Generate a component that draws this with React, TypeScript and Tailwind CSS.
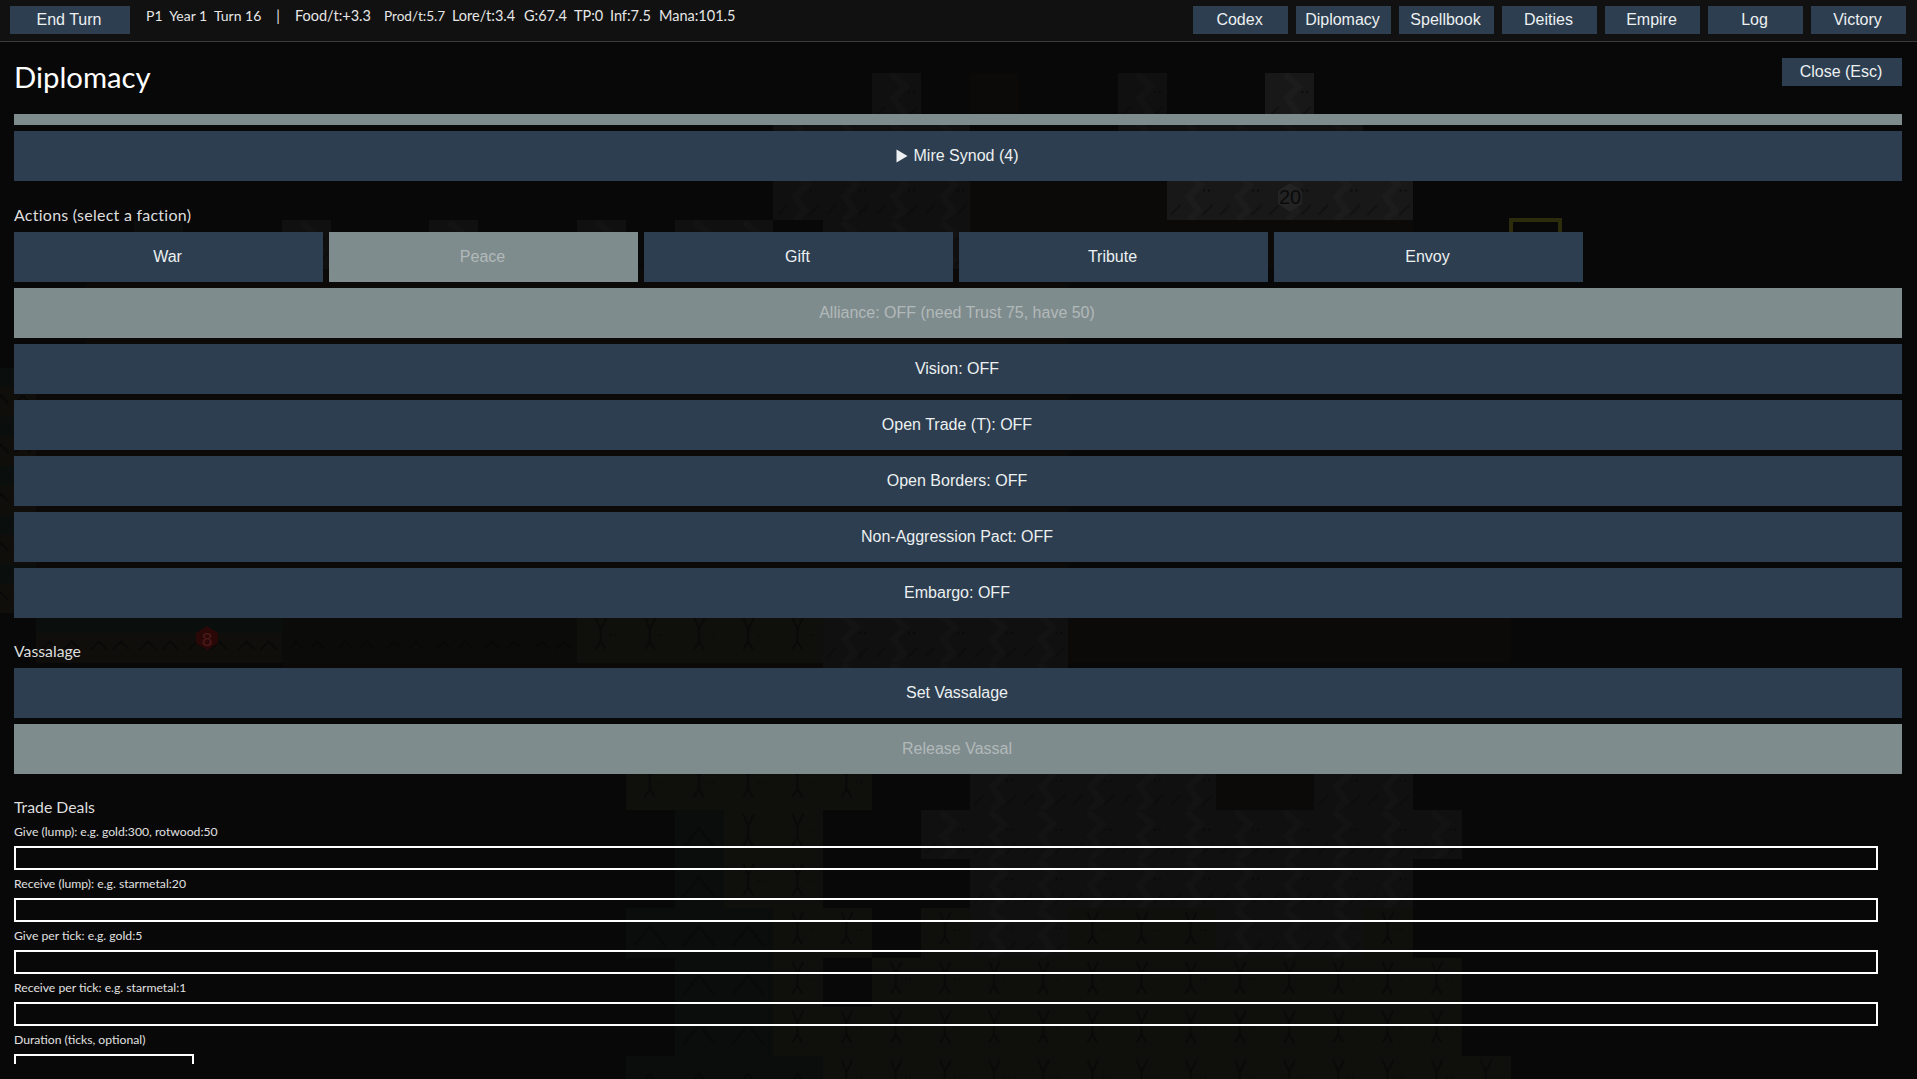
const NAV = ["Codex", "Diplomacy", "Spellbook", "Deities", "Empire", "Log", "Victory"];
const ACTIONS = ["War", "Peace", "Gift", "Tribute", "Envoy"];
const TOGGLES = [
  "Vision: OFF",
  "Open Trade (T): OFF",
  "Open Borders: OFF",
  "Non-Aggression Pact: OFF",
  "Embargo: OFF",
];
const DEAL_FIELDS = [
  "Give (lump): e.g. gold:300, rotwood:50",
  "Receive (lump): e.g. starmetal:20",
  "Give per tick: e.g. gold:5",
  "Receive per tick: e.g. starmetal:1",
];

// map tiles seen through the dim overlay: [row, first column, last column, kind]
const TILE = 49.17;
const ORIGIN_X = 35.8;
const ORIGIN_Y = 72.5;
const TILES: [number, number, number, string][] = [
  [0, 17, 17, "rock"], [0, 19, 19, "dirt"], [0, 22, 22, "rock"], [0, 25, 25, "rockHi"],
  [1, 15, 18, "rock"], [1, 22, 26, "rock"],
  [2, 15, 18, "rock"], [2, 19, 22, "dirt"], [2, 23, 27, "rockHi"],
  [3, 2, 2, "teal"], [3, 5, 5, "rock"], [3, 8, 8, "rock"], [3, 11, 11, "rock"], [3, 13, 13, "rock"],
  [3, 14, 14, "rock"], [3, 16, 18, "rock"], [3, 19, 27, "dirt"],
  [4, 1, 20, "dirt"], [5, 1, 20, "dirt"],
  [6, -1, -1, "ridge"], [6, 0, 20, "dirt"],
  [7, -1, -1, "ridge"], [7, 0, 20, "dirt"],
  [8, -1, -1, "ridge"], [8, 0, 20, "dirt"],
  [9, -1, -1, "ridge"], [9, 0, 20, "dirt"],
  [10, -1, -1, "ridge"], [10, 0, 20, "dirt"],
  [11, 0, 4, "ridge"], [11, 5, 10, "ridgeDim"], [11, 11, 15, "bush"], [11, 16, 20, "rock"], [11, 21, 29, "dirt"],
  [12, 5, 15, "dirt"], [12, 16, 20, "rock"],
  [14, 12, 16, "bush"], [14, 19, 23, "rock"], [14, 24, 25, "dirt"], [14, 26, 27, "rock"],
  [15, 13, 13, "teal"], [15, 14, 15, "bush"], [15, 18, 28, "rock"],
  [16, 13, 13, "teal"], [16, 14, 15, "bush"], [16, 19, 27, "rock"],
  [17, 12, 14, "teal"], [17, 15, 16, "bush"], [17, 18, 18, "bush"], [17, 19, 20, "rock"],
  [17, 21, 23, "bush"], [17, 24, 26, "rock"], [17, 27, 27, "bush"],
  [18, 13, 14, "teal"], [18, 15, 15, "bush"], [18, 17, 28, "bush"],
  [19, 13, 14, "teal"], [19, 15, 28, "bush"],
  [20, 12, 15, "teal"], [20, 16, 29, "bush"],
];

const STATS: [string, string][] = [
  ["Food/t:+3.3", "w-[89px]"],
  ["Prod/t:5.7", "w-[68px] text-[13.6px]"],
  ["Lore/t:3.4", "w-[72px]"],
  ["G:67.4", "w-[50px]"],
  ["TP:0", "w-[36px]"],
  ["Inf:7.5", "w-[49px]"],
  ["Mana:101.5", "w-[80px]"],
];

const MapBackdrop = () => (
  <svg className="absolute inset-0" width="1917" height="1079" shapeRendering="crispEdges">
    <defs>
      <pattern id="rock" width={TILE} height={TILE} patternUnits="userSpaceOnUse" patternTransform={`translate(${ORIGIN_X} ${ORIGIN_Y})`}>
        <rect width="50" height="50" fill="#101010" />
        <path d="M20 2 L34 14 L22 26 L32 40 L22 49" fill="none" stroke="#131313" strokeWidth="6" shapeRendering="auto" />
        <path d="M4 44 L14 34 M36 44 L46 34" stroke="#0c0c0c" strokeWidth="2" shapeRendering="auto" />
        <path d="M36 20h2M41 20h2" stroke="#0a0a0a" strokeWidth="2" />
      </pattern>
      <pattern id="rockHi" width={TILE} height={TILE} patternUnits="userSpaceOnUse" patternTransform={`translate(${ORIGIN_X} ${ORIGIN_Y})`}>
        <rect width="50" height="50" fill="#181818" />
        <path d="M20 2 L34 14 L22 26 L32 40 L22 49" fill="none" stroke="#1c1c1c" strokeWidth="6" shapeRendering="auto" />
        <path d="M4 44 L14 34 M36 44 L46 34" stroke="#111111" strokeWidth="2" shapeRendering="auto" />
        <path d="M36 20h2M41 20h2" stroke="#0c0c0c" strokeWidth="2" />
      </pattern>
      <pattern id="bush" width={TILE} height={TILE} patternUnits="userSpaceOnUse" patternTransform={`translate(${ORIGIN_X} ${ORIGIN_Y})`}>
        <rect width="50" height="50" fill="#0f0f0c" />
        <path d="M19 4 L24 16 L30 4 M24 16 L24 28 M19 36 L24 28 L29 36" fill="none" stroke="#090908" strokeWidth="2" shapeRendering="auto" />
        <path d="M33 22h2M37 22h2" stroke="#0b0b09" strokeWidth="2" />
      </pattern>
      <pattern id="teal" width={TILE} height={TILE} patternUnits="userSpaceOnUse" patternTransform={`translate(${ORIGIN_X} ${ORIGIN_Y})`}>
        <rect width="50" height="50" fill="#0b0d0d" />
        <path d="M8 38 L24 18 L40 38" fill="none" stroke="#080909" strokeWidth="3" shapeRendering="auto" />
      </pattern>
      <pattern id="ridge" width={TILE} height={TILE} patternUnits="userSpaceOnUse" patternTransform={`translate(${ORIGIN_X} ${ORIGIN_Y})`}>
        <rect width="50" height="50" fill="#100e0a" />
        <rect width="50" height="20" fill="#0a0f0e" />
        <path d="M6 36 L14 28 L22 36 M28 36 L36 28 L44 36" fill="none" stroke="#080808" strokeWidth="2" shapeRendering="auto" />
      </pattern>
      <pattern id="ridgeDim" width={TILE} height={TILE} patternUnits="userSpaceOnUse" patternTransform={`translate(${ORIGIN_X} ${ORIGIN_Y})`}>
        <rect width="50" height="50" fill="#0b0b0a" />
        <path d="M6 36 L14 28 L22 36 M28 36 L36 28 L44 36" fill="none" stroke="#080808" strokeWidth="2" shapeRendering="auto" />
      </pattern>
    </defs>
    {TILES.map(([row, from, to, kind]) => (
      <rect
        key={`${row}-${from}`}
        x={ORIGIN_X + from * TILE}
        y={ORIGIN_Y + row * TILE}
        width={(to - from + 1) * TILE}
        height={TILE}
        fill={kind === "dirt" ? "#0b0a08" : `url(#${kind})`}
      />
    ))}
    {/* selected tile and city badges */}
    <rect x="1511" y="220" width="49" height="50" fill="none" stroke="#2c2c0c" strokeWidth="4" />
    <path d="M1290 183 L1302 191 L1302 204 L1290 212 L1278 204 L1278 191 Z" fill="#232323" shapeRendering="auto" />
    <text x="1290" y="204" textAnchor="middle" fontFamily="'Liberation Sans', sans-serif" fontSize="20" fill="#0a0a0a">20</text>
    <path d="M207 626 L218 633 L218 643 L207 650 L196 643 L196 633 Z" fill="#2a0808" shapeRendering="auto" />
    <text x="207" y="646" textAnchor="middle" fontFamily="'Liberation Sans', sans-serif" fontSize="19" fill="#4a1a1a">8</text>
  </svg>
);

const Btn = ({ label, off, className }: { label: string; off?: boolean; className: string }) => (
  <button
    className={`block shrink-0 pr-[2px] font-['Liberation_Sans',sans-serif] text-base ${
      off ? "bg-[#7f8c8d] text-[#b2b9ba]" : "bg-[#2c3e50] text-[#ecf0f1]"
    } ${className}`}
  >
    {label}
  </button>
);

const App = () => {
  return (
    <div className="relative w-[1917px] h-[1079px] overflow-hidden bg-[#080808] font-['Lato',sans-serif] text-[#dedede]">
      <MapBackdrop />

      {/* TOP BAR */}
      <div className="relative flex h-[42px] items-start border-b border-[#3a3a3a] bg-[#111111] pt-[6px] pl-[10px] pr-[11px]">
        <Btn label="End Turn" className="w-[120px] h-[28px]" />
        <div className="ml-[16px] flex text-[14.5px] leading-[20px] text-[#e6e6e6]">
          <span className="whitespace-pre text-[14px]">{"P1  Year 1  Turn 16"}</span>
          <span className="ml-[15px] mr-[15px]">|</span>
          {STATS.map(([text, width]) => (
            <span key={text} className={`whitespace-pre ${width}`}>
              {text}
            </span>
          ))}
        </div>
        <div className="ml-auto flex gap-[8px]">
          {NAV.map((name) => (
            <Btn key={name} label={name} className="w-[95px] h-[28px]" />
          ))}
        </div>
      </div>

      {/* DIPLOMACY PANEL */}
      <div className="absolute left-0 top-[42px] w-[1917px] h-[1022px] overflow-hidden px-[14px]">
        <Btn label="Close (Esc)" className="absolute right-[15px] top-[16px] w-[120px] h-[28px]" />
        <h1 className="h-[72px] pt-[15px] text-[29.3px] leading-[40px] text-white">Diplomacy</h1>

        <div className="h-[11px] w-[1888px] bg-[#7f8c8d]" />
        <div className="mt-[6px] flex h-[50px] w-[1888px] items-center justify-center bg-[#2c3e50] pr-[2px] font-['Liberation_Sans',sans-serif] text-base text-[#ecf0f1]">
          <svg width="12" height="14" viewBox="0 0 12 14" className="mr-[6px]">
            <path d="M0.5 0.5 L11.5 7 L0.5 13.5 Z" fill="#ecf0f1" />
          </svg>
          Mire Synod (4)
        </div>

        <div className="mt-[24px] h-[27px] text-[16px] leading-[20px] tracking-[0.25px]">Actions (select a faction)</div>
        <div className="flex gap-[6px]">
          {ACTIONS.map((name) => (
            <Btn key={name} label={name} off={name === "Peace"} className="w-[309px] h-[50px]" />
          ))}
        </div>

        <div className="mt-[6px] flex w-[1888px] flex-col gap-[6px]">
          <Btn label="Alliance: OFF (need Trust 75, have 50)" off className="w-full h-[50px]" />
          {TOGGLES.map((name) => (
            <Btn key={name} label={name} className="w-full h-[50px]" />
          ))}
        </div>

        <div className="mt-[23px] h-[27px] text-[15.8px] leading-[20px]">Vassalage</div>
        <div className="flex w-[1888px] flex-col gap-[6px]">
          <Btn label="Set Vassalage" className="w-full h-[50px]" />
          <Btn label="Release Vassal" off className="w-full h-[50px]" />
        </div>

        <div className="mt-[23px] h-[21px] text-[15.8px] leading-[20px]">Trade Deals</div>
        {DEAL_FIELDS.map((label) => (
          <div key={label}>
            <div className="h-[28px] pt-[5px] text-[12.2px] leading-[18px] text-[#e0e0e0]">{label}</div>
            <div className="h-[24px] w-[1864px] border-2 border-white" />
          </div>
        ))}
        <div className="h-[28px] pt-[5px] text-[12.2px] leading-[18px] text-[#e0e0e0]">Duration (ticks, optional)</div>
        <div className="h-[24px] w-[180px] border-2 border-white" />
      </div>
    </div>
  );
};

export default App;
